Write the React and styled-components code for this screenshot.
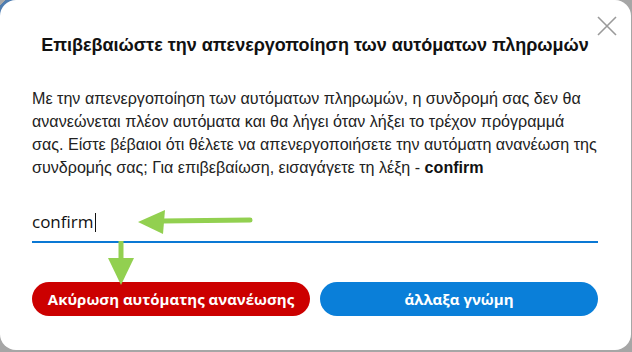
import React from "react";
import styled, { createGlobalStyle } from "styled-components";

const Global = createGlobalStyle`
  html, body { margin: 0; padding: 0; }
  body {
    width: 632px;
    height: 352px;
    overflow: hidden;
    background: linear-gradient(135deg, #a8a8a8 0 4px, #4f7db0 4px 14px, #a6a6a6 14px);
    font-family: "Liberation Sans", Arial, sans-serif;
  }
`;

const Dialog = styled.div`
  position: relative;
  box-sizing: border-box;
  width: 631px;
  height: 350px;
  background: #fff;
  border-radius: 16px;
  padding: 34px 33px 0 32px;
  display: flex;
  flex-direction: column;
`;

const Close = styled.button`
  position: absolute;
  top: 15px;
  right: 13px;
  width: 22px;
  height: 22px;
  padding: 0;
  border: none;
  background: none;
  cursor: pointer;
  display: flex;
  align-items: center;
  justify-content: center;
`;

const Title = styled.h2`
  margin: 0;
  font-size: 18px;
  font-weight: bold;
  color: #111;
  text-align: center;
  line-height: 22px;
`;

const Body = styled.p`
  margin: 31px 0 0;
  font-size: 16.1px;
  line-height: 23px;
  color: #222;
  white-space: nowrap;
`;

const Strong = styled.strong`
  font-weight: bold;
  color: #111;
`;

const Field = styled.div`
  margin-top: 31px;
  position: relative;
  border-bottom: 2px solid #0a78d4;
  height: 31px;
  display: flex;
  align-items: flex-start;
`;

const InputText = styled.span`
  font-family: "Open Sans", sans-serif;
  font-size: 17px;
  line-height: 24px;
  color: #111;
  display: flex;
  align-items: center;
`;

const Caret = styled.span`
  display: inline-block;
  width: 1px;
  height: 19px;
  background: #111;
  margin-left: 1px;
`;

const Arrow = styled.svg`
  position: absolute;
  overflow: visible;
`;

const Buttons = styled.div`
  margin-top: 39px;
  display: flex;
  gap: 10px;
`;

const Pill = styled.button`
  flex: 1;
  height: 34px;
  border: none;
  border-radius: 17px;
  background: ${(p) => (p.$danger ? "#cc0000" : "#0a7fd9")};
  color: #fff;
  font-family: "Open Sans", sans-serif;
  font-weight: 700;
  font-size: 15px;
  cursor: pointer;
`;

export default function App() {
  return (
    <>
      <Global />
      <Dialog>
        <Close aria-label="close">
          <svg width="20" height="20" viewBox="0 0 20 20">
            <path d="M1 1L19 19M19 1L1 19" stroke="#9a9a9a" strokeWidth="1.6" />
          </svg>
        </Close>
        <Title>Επιβεβαιώστε την απενεργοποίηση των αυτόματων πληρωμών</Title>
        <Body>
          Με την απενεργοποίηση των αυτόματων πληρωμών, η συνδρομή σας δεν θα
          <br />
          ανανεώνεται πλέον αυτόματα και θα λήγει όταν λήξει το τρέχον πρόγραμμά
          <br />
          σας. Είστε βέβαιοι ότι θέλετε να απενεργοποιήσετε την αυτόματη ανανέωση της
          <br />
          συνδρομής σας; Για επιβεβαίωση, εισαγάγετε τη λέξη - <Strong>confirm</Strong>
        </Body>
        <Field>
          <InputText>
            confirm
            <Caret />
          </InputText>
          <Arrow style={{ left: 100, top: -2 }} width="120" height="26" viewBox="0 0 120 26">
            <path d="M30 13 L118 12" stroke="#92d050" strokeWidth="5" strokeLinecap="round" fill="none" />
            <path d="M6 14 L33 2 L31 26 Z" fill="#92d050" />
          </Arrow>
          <Arrow style={{ left: 74, top: 31 }} width="30" height="45" viewBox="0 0 30 45">
            <path d="M15 0 L15 18" stroke="#92d050" strokeWidth="5" fill="none" />
            <path d="M2 17 L28 17 L15 44 Z" fill="#92d050" />
          </Arrow>
        </Field>
        <Buttons>
          <Pill $danger>Ακύρωση αυτόματης ανανέωσης</Pill>
          <Pill>άλλαξα γνώμη</Pill>
        </Buttons>
      </Dialog>
    </>
  );
}
